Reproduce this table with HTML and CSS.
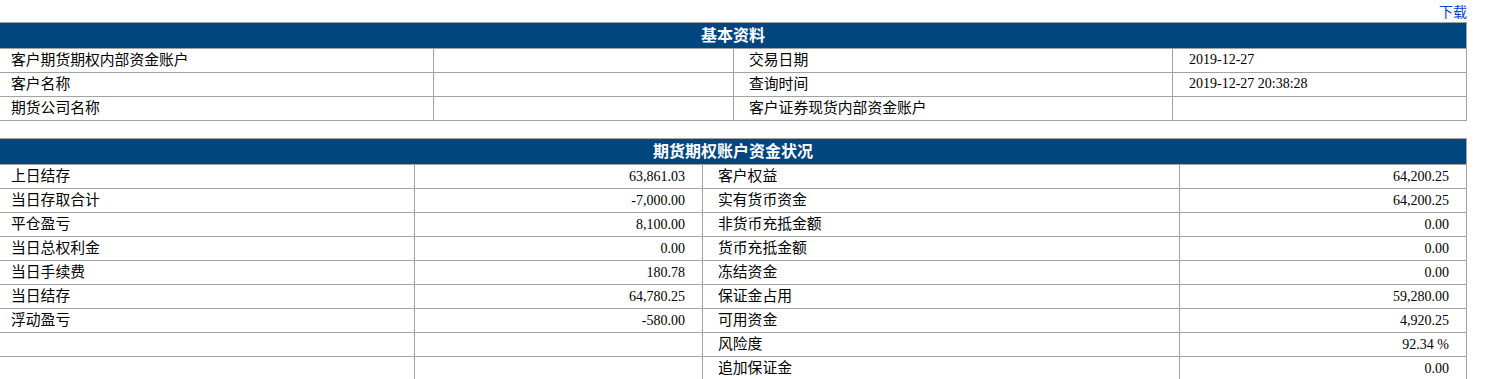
FILE: index.html
```html
<!DOCTYPE html>
<html lang="zh-CN">
<head>
<meta charset="utf-8">
<title>资金状况</title>
<link rel="stylesheet" href="styles.css">
</head>
<body>
<div class="page">
  <div class="toolbar"><a class="download" href="#">下载</a></div>

  <div class="grid grid-basic">
    <div class="head">基本资料</div>
    <div class="cell label first">客户期货期权内部资金账户</div>
    <div class="cell"></div>
    <div class="cell label">交易日期</div>
    <div class="cell value">2019-12-27</div>

    <div class="cell label first">客户名称</div>
    <div class="cell"></div>
    <div class="cell label">查询时间</div>
    <div class="cell value">2019-12-27 20:38:28</div>

    <div class="cell label first">期货公司名称</div>
    <div class="cell"></div>
    <div class="cell label">客户证券现货内部资金账户</div>
    <div class="cell value"></div>
  </div>

  <div class="grid grid-funds">
    <div class="head">期货期权账户资金状况</div>
    <div class="cell label first">上日结存</div>
    <div class="cell num">63,861.03</div>
    <div class="cell label">客户权益</div>
    <div class="cell num">64,200.25</div>

    <div class="cell label first">当日存取合计</div>
    <div class="cell num">-7,000.00</div>
    <div class="cell label">实有货币资金</div>
    <div class="cell num">64,200.25</div>

    <div class="cell label first">平仓盈亏</div>
    <div class="cell num">8,100.00</div>
    <div class="cell label">非货币充抵金额</div>
    <div class="cell num">0.00</div>

    <div class="cell label first">当日总权利金</div>
    <div class="cell num">0.00</div>
    <div class="cell label">货币充抵金额</div>
    <div class="cell num">0.00</div>

    <div class="cell label first">当日手续费</div>
    <div class="cell num">180.78</div>
    <div class="cell label">冻结资金</div>
    <div class="cell num">0.00</div>

    <div class="cell label first">当日结存</div>
    <div class="cell num">64,780.25</div>
    <div class="cell label">保证金占用</div>
    <div class="cell num">59,280.00</div>

    <div class="cell label first">浮动盈亏</div>
    <div class="cell num">-580.00</div>
    <div class="cell label">可用资金</div>
    <div class="cell num">4,920.25</div>

    <div class="cell label first"></div>
    <div class="cell num"></div>
    <div class="cell label">风险度</div>
    <div class="cell num">92.34 %</div>

    <div class="cell label first"></div>
    <div class="cell num"></div>
    <div class="cell label">追加保证金</div>
    <div class="cell num">0.00</div>
  </div>
</div>
</body>
</html>
```

FILE: styles.css
```css
html, body {
  margin: 0;
  padding: 0;
  background: #ffffff;
}

body {
  font-family: "Noto Sans CJK SC", "Noto Sans", sans-serif;
  color: #000000;
}

.page {
  width: 1467px;
}

.toolbar {
  height: 22px;
  display: flex;
  justify-content: flex-end;
  align-items: center;
}

.download {
  font-size: 14px;
  line-height: 16px;
  color: #0b3fd9;
  text-decoration: none;
  margin-bottom: 1px;
}

.grid {
  display: grid;
  gap: 1px;
  padding: 1px 1px 1px 0;
  background: #a3a3a3;
  grid-auto-rows: 23px;
}

.grid-basic {
  grid-template-columns: 433px 299px 438px 293px;
  grid-template-rows: 25px;
}

.grid-funds {
  margin-top: 17px;
  grid-template-columns: 414px 287px 476px 286px;
  grid-template-rows: 25px;
}

.head {
  grid-column: 1 / -1;
  background: #02467f;
  color: #ffffff;
  font-weight: bold;
  font-size: 16px;
  display: flex;
  align-items: center;
  justify-content: center;
  line-height: 20px;
  padding-bottom: 3px;
}

.cell {
  background: #ffffff;
  display: flex;
  align-items: center;
  white-space: nowrap;
  overflow: hidden;
}

.label {
  font-size: 14.8px;
  padding-left: 15px;
  line-height: 18px;
  padding-bottom: 3px;
}

.label.first {
  padding-left: 11px;
}

.value {
  font-family: "Liberation Serif", "Times New Roman", serif;
  font-size: 14px;
  padding-left: 16px;
  padding-bottom: 1px;
}

.num {
  font-family: "Liberation Serif", "Times New Roman", serif;
  font-size: 14px;
  justify-content: flex-end;
  padding-right: 17px;
}
```
